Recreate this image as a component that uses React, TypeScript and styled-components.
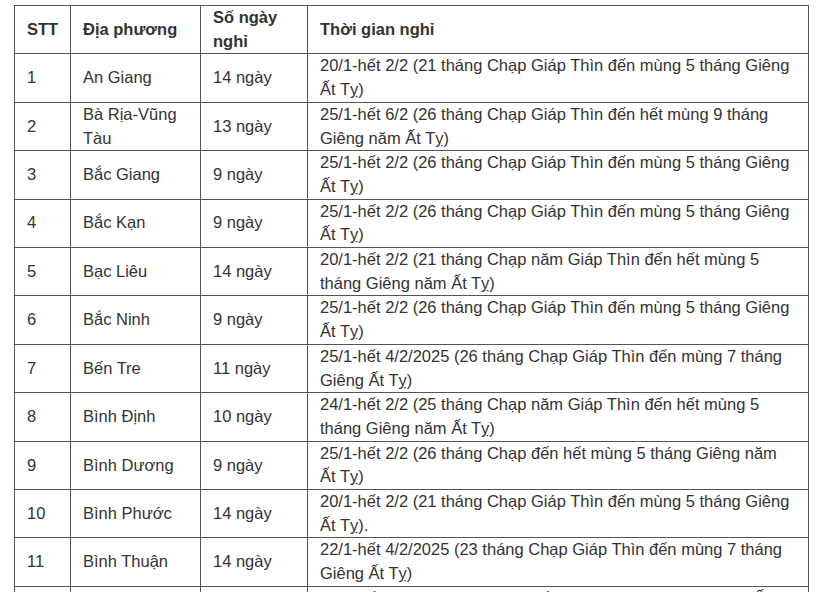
import React from 'react';
import styled, { createGlobalStyle } from 'styled-components';

const GlobalStyle = createGlobalStyle`
  html, body {
    margin: 0;
    padding: 0;
    background: #ffffff;
  }
  body {
    font-family: "Liberation Sans", Arial, sans-serif;
  }
`;

const Page = styled.div`
  width: 820px;
  height: 592px;
  overflow: hidden;
  padding: 5px 0 0 14px;
  box-sizing: border-box;
`;

const Table = styled.table`
  width: 794px;
  border-collapse: collapse;
  table-layout: fixed;
  color: #333333;
  font-size: 16.5px;
  line-height: 23.7px;
`;

const HeadCell = styled.th`
  border: 1px solid #555555;
  padding: 0 13px 0 12px;
  text-align: left;
  vertical-align: middle;
  font-weight: bold;
  height: 47.4px;
`;

const Cell = styled.td`
  border: 1px solid #555555;
  padding: 0 13px 0 12px;
  vertical-align: middle;
  height: 47.4px;
`;

type Row = { stt: number; place: string; days: string; period: string };

const rows: Row[] = [
  { stt: 1, place: 'An Giang', days: '14 ngày', period: '20/1-hết 2/2 (21 tháng Chạp Giáp Thìn đến mùng 5 tháng Giêng Ất Tỵ)' },
  { stt: 2, place: 'Bà Rịa-Vũng Tàu', days: '13 ngày', period: '25/1-hết 6/2 (26 tháng Chạp Giáp Thìn đến hết mùng 9 tháng Giêng năm Ất Tỵ)' },
  { stt: 3, place: 'Bắc Giang', days: '9 ngày', period: '25/1-hết 2/2 (26 tháng Chạp Giáp Thìn đến mùng 5 tháng Giêng Ất Tỵ)' },
  { stt: 4, place: 'Bắc Kạn', days: '9 ngày', period: '25/1-hết 2/2 (26 tháng Chạp Giáp Thìn đến mùng 5 tháng Giêng Ất Tỵ)' },
  { stt: 5, place: 'Bạc Liêu', days: '14 ngày', period: '20/1-hết 2/2 (21 tháng Chạp năm Giáp Thìn đến hết mùng 5 tháng Giêng năm Ất Tỵ)' },
  { stt: 6, place: 'Bắc Ninh', days: '9 ngày', period: '25/1-hết 2/2 (26 tháng Chạp Giáp Thìn đến mùng 5 tháng Giêng Ất Tỵ)' },
  { stt: 7, place: 'Bến Tre', days: '11 ngày', period: '25/1-hết 4/2/2025 (26 tháng Chạp Giáp Thìn đến mùng 7 tháng Giêng Ất Tỵ)' },
  { stt: 8, place: 'Bình Định', days: '10 ngày', period: '24/1-hết 2/2 (25 tháng Chạp năm Giáp Thìn đến hết mùng 5 tháng Giêng năm Ất Tỵ)' },
  { stt: 9, place: 'Bình Dương', days: '9 ngày', period: '25/1-hết 2/2 (26 tháng Chạp đến hết mùng 5 tháng Giêng năm Ất Tỵ)' },
  { stt: 10, place: 'Bình Phước', days: '14 ngày', period: '20/1-hết 2/2 (21 tháng Chạp Giáp Thìn đến mùng 5 tháng Giêng Ất Tỵ).' },
  { stt: 11, place: 'Bình Thuận', days: '14 ngày', period: '22/1-hết 4/2/2025 (23 tháng Chạp Giáp Thìn đến mùng 7 tháng Giêng Ất Tỵ)' },
  { stt: 12, place: 'Cà Mau', days: '9 ngày', period: '25/1-hết 2/2 (26 tháng Chạp đến mùng 5 tháng Giêng năm Ất Tỵ)' },
];

const App: React.FC = () => {
  return (
    <Page>
      <GlobalStyle />
      <Table>
        <colgroup>
          <col style={{ width: 56 }} />
          <col style={{ width: 130 }} />
          <col style={{ width: 107 }} />
          <col style={{ width: 501 }} />
        </colgroup>
        <thead>
          <tr>
            <HeadCell>STT</HeadCell>
            <HeadCell>Địa phương</HeadCell>
            <HeadCell>Số ngày nghỉ</HeadCell>
            <HeadCell>Thời gian nghỉ</HeadCell>
          </tr>
        </thead>
        <tbody>
          {rows.map(r => (
            <tr key={r.stt}>
              <Cell>{r.stt}</Cell>
              <Cell>{r.place}</Cell>
              <Cell>{r.days}</Cell>
              <Cell>{r.period}</Cell>
            </tr>
          ))}
        </tbody>
      </Table>
    </Page>
  );
};

export default App;
